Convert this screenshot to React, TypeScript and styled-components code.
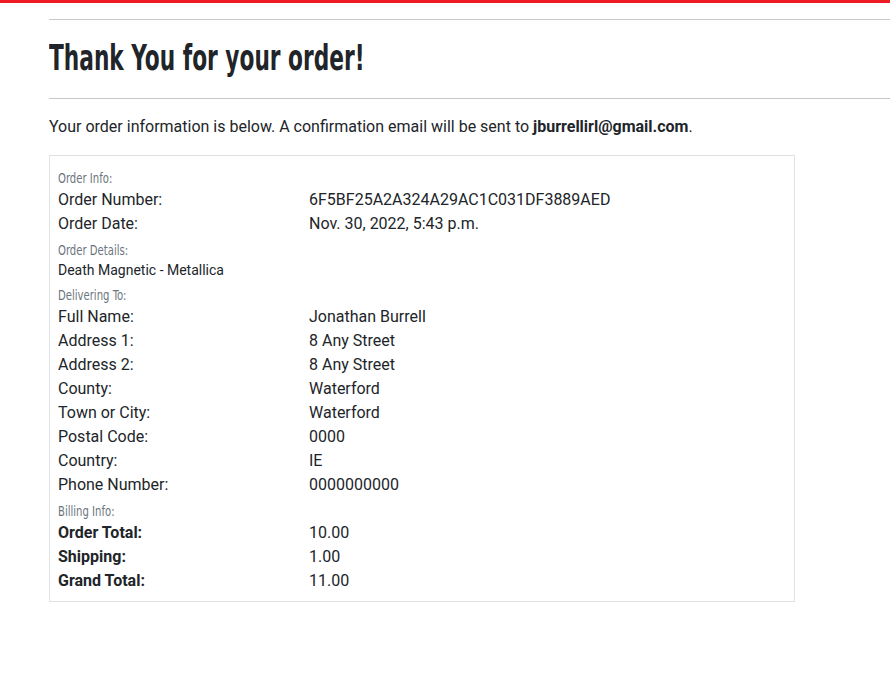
import React from 'react';
import styled, { createGlobalStyle } from 'styled-components';

const GlobalStyle = createGlobalStyle`
  html, body {
    margin: 0;
    padding: 0;
    background: #ffffff;
  }
  body {
    font-family: Roboto, "Liberation Sans", Arial, sans-serif;
    color: #212529;
    font-size: 16px;
    line-height: 1.5;
  }
`;

const condensed = `"DejaVu Sans Condensed", "DejaVu Sans", sans-serif`;

const TopBar = styled.div`
  height: 3px;
  background-color: #ed1c24;
`;

const Page = styled.main`
  display: flex;
  flex-direction: column;
  padding: 16px 0 40px 49px;
`;

const Rule = styled.hr`
  width: 100%;
  margin: 0;
  border: 0;
  border-top: 1px solid #c8c8c8;
`;

const Heading = styled.h1`
  align-self: flex-start;
  margin: 16px 0 19px;
  font-family: ${condensed};
  font-weight: 700;
  font-size: 36px;
  line-height: 1.2;
  color: #212529;
  transform: scaleX(0.67);
  transform-origin: left center;
`;

const Intro = styled.p`
  margin: 16px 0 16px;
  font-size: 16px;
  line-height: 24px;
`;

const Email = styled.strong`
  font-weight: 700;
`;

const Card = styled.section`
  width: 728px;
  padding: 8px;
  border: 1px solid #dee2e6;
  display: grid;
  grid-template-columns: 251px 1fr;
`;

const SectionLabel = styled.div`
  grid-column: 1 / -1;
  padding-top: 4px;
  line-height: 20px;
`;

const LabelText = styled.span`
  display: inline-block;
  font-family: ${condensed};
  font-size: 14px;
  color: #6c757d;
  transform: scaleX(0.8);
  transform-origin: left center;
`;

const Cell = styled.div<{ $bold?: boolean }>`
  font-size: 16px;
  line-height: 24px;
  font-weight: ${({ $bold }) => ($bold ? 700 : 400)};
`;

const Detail = styled.div`
  grid-column: 1 / -1;
  font-size: 14px;
  line-height: 21px;
`;

type Row = { label: string; value: string; bold?: boolean };

const orderInfo: Row[] = [
  { label: 'Order Number:', value: '6F5BF25A2A324A29AC1C031DF3889AED' },
  { label: 'Order Date:', value: 'Nov. 30, 2022, 5:43 p.m.' },
];

const delivery: Row[] = [
  { label: 'Full Name:', value: 'Jonathan Burrell' },
  { label: 'Address 1:', value: '8 Any Street' },
  { label: 'Address 2:', value: '8 Any Street' },
  { label: 'County:', value: 'Waterford' },
  { label: 'Town or City:', value: 'Waterford' },
  { label: 'Postal Code:', value: '0000' },
  { label: 'Country:', value: 'IE' },
  { label: 'Phone Number:', value: '0000000000' },
];

const billing: Row[] = [
  { label: 'Order Total:', value: '10.00', bold: true },
  { label: 'Shipping:', value: '1.00', bold: true },
  { label: 'Grand Total:', value: '11.00', bold: true },
];

const Rows: React.FC<{ rows: Row[] }> = ({ rows }) => (
  <>
    {rows.map((r) => (
      <React.Fragment key={r.label}>
        <Cell $bold={r.bold}>{r.label}</Cell>
        <Cell>{r.value}</Cell>
      </React.Fragment>
    ))}
  </>
);

const Section: React.FC<{ title: string }> = ({ title }) => (
  <SectionLabel>
    <LabelText>{title}</LabelText>
  </SectionLabel>
);

export default function App() {
  return (
    <>
      <GlobalStyle />
      <TopBar />
      <Page>
        <Rule />
        <Heading>Thank You for your order!</Heading>
        <Rule />
        <Intro>
          Your order information is below. A confirmation email will be sent to{' '}
          <Email>jburrellirl@gmail.com</Email>.
        </Intro>
        <Card>
          <Section title="Order Info:" />
          <Rows rows={orderInfo} />
          <Section title="Order Details:" />
          <Detail>Death Magnetic - Metallica</Detail>
          <Section title="Delivering To:" />
          <Rows rows={delivery} />
          <Section title="Billing Info:" />
          <Rows rows={billing} />
        </Card>
      </Page>
    </>
  );
}
